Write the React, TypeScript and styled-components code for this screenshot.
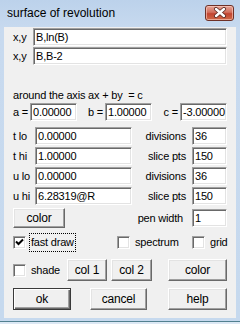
import styled, { createGlobalStyle } from "styled-components";

const GlobalStyle = createGlobalStyle`
  html, body {
    margin: 0;
    padding: 0;
    background: #dce8f4;
  }
  * {
    box-sizing: border-box;
  }
`;

const font = `"Liberation Sans", Arial, sans-serif`;

const Window = styled.div`
  width: 240px;
  height: 322px;
  display: flex;
  flex-direction: column;
  background: linear-gradient(#bcd2eb, #c8daef 30px, #c6d9ee);
  border-bottom: 1px solid #52808f;
  font-family: ${font};
`;

const TitleBar = styled.div`
  height: 27px;
  display: flex;
  align-items: center;
  padding: 0 6px 1px 7px;
`;

const Title = styled.div`
  font-size: 12px;
  color: #000;
`;

const CloseBtn = styled.div`
  margin-left: auto;
  margin-top: -1px;
  width: 29px;
  height: 16px;
  border-radius: 3px;
  border: 1px solid #6e3127;
  background: linear-gradient(#e6a597, #d26f5d 45%, #c24430 55%, #cf6a48);
  box-shadow: inset 0 0 0 1px rgba(255, 210, 200, 0.6);
  display: flex;
  align-items: center;
  justify-content: center;
`;

const Client = styled.div`
  flex: 1;
  margin: 0 4px 3px 4px;
  background: #f0f0f0;
  padding: 1px 9px 0 9px;
  display: flex;
  flex-direction: column;
  font-size: 11px;
  letter-spacing: -0.2px;
  color: #000;
`;

const Row = styled.div<{ $top: number; $h?: number }>`
  display: flex;
  align-items: center;
  margin-top: ${(p) => p.$top}px;
  height: ${(p) => p.$h ?? 18}px;
`;

const Grid = styled.div<{ $top: number; $cols: string; $h?: number }>`
  display: grid;
  grid-template-columns: ${(p) => p.$cols};
  align-items: center;
  margin-top: ${(p) => p.$top}px;
  height: ${(p) => p.$h ?? 18}px;
`;

const Label = styled.span<{ $w?: number }>`
  width: ${(p) => (p.$w ? `${p.$w}px` : "auto")};
  flex-shrink: 0;
  white-space: nowrap;
`;

const RLabel = styled.span<{ $pr?: number }>`
  justify-self: end;
  padding-right: ${(p) => p.$pr ?? 2}px;
  white-space: nowrap;
`;

const Field = styled.div<{ $w?: number }>`
  width: ${(p) => (p.$w ? `${p.$w}px` : "100%")};
  flex: ${(p) => (p.$w ? "none" : "1")};
  height: 18px;
  background: #fff;
  border-top: 1px solid #a0a0a0;
  border-left: 1px solid #a0a0a0;
  border-right: 1px solid #fff;
  border-bottom: 1px solid #fff;
  box-shadow: inset 1px 1px 0 #696969, inset -1px -1px 0 #e3e3e3;
  padding: 2px 0 0 2px;
  font-size: 11px;
  line-height: 13px;
  white-space: nowrap;
  overflow: hidden;
`;

const Button = styled.div<{ $w: number; $h?: number; $def?: boolean; $ml?: number }>`
  width: ${(p) => p.$w}px;
  height: ${(p) => p.$h ?? 22}px;
  margin-left: ${(p) => (p.$ml === undefined ? 0 : `${p.$ml}px`)};
  flex: none;
  display: flex;
  align-items: center;
  justify-content: center;
  background: #f0f0f0;
  border: 1px solid ${(p) => (p.$def ? "#3a3a3a" : "#fff")};
  border-right-color: ${(p) => (p.$def ? "#3a3a3a" : "#696969")};
  border-bottom-color: ${(p) => (p.$def ? "#3a3a3a" : "#696969")};
  box-shadow: ${(p) =>
    p.$def
      ? "inset 1px 1px 0 #fff, inset -1px -1px 0 #696969, inset -2px -2px 0 #a0a0a0"
      : "inset -1px -1px 0 #a0a0a0, inset 1px 1px 0 #e3e3e3"};
  padding-bottom: 1px;
  font-size: 12px;
  letter-spacing: -0.2px;
`;

const Check = styled.div<{ $w?: number }>`
  width: ${(p) => (p.$w ? `${p.$w}px` : "auto")};
  flex: none;
  display: flex;
  align-items: center;
  gap: 5px;
`;

const Box = styled.div`
  width: 13px;
  height: 13px;
  flex: none;
  background: #fff;
  border-top: 1px solid #a0a0a0;
  border-left: 1px solid #a0a0a0;
  border-right: 1px solid #fff;
  border-bottom: 1px solid #fff;
  box-shadow: inset 1px 1px 0 #696969, inset -1px -1px 0 #e3e3e3;
  display: flex;
  align-items: center;
  justify-content: center;
`;

const Focus = styled.span`
  outline: 1px dotted #000;
  outline-offset: 0;
  padding: 2px 1px 3px 1px;
  margin-left: -1px;
`;

const Tick = () => (
  <svg width="9" height="9" viewBox="0 0 9 9">
    <path d="M1 3.5 L3.5 6 L8 1.5" fill="none" stroke="#000" strokeWidth="2" />
  </svg>
);

const XIcon = () => (
  <svg width="14" height="11" viewBox="0 0 14 11">
    <path d="M3 2 L11 9 M11 2 L3 9" stroke="#5a2a22" strokeWidth="4" strokeLinecap="round" />
    <path d="M3 2 L11 9 M11 2 L3 9" stroke="#fff" strokeWidth="2.4" strokeLinecap="round" />
  </svg>
);

const rangeCols = "22px 97px 60px 35px";

const App = () => {
  return (
    <>
      <GlobalStyle />
      <Window>
        <TitleBar>
          <Title>surface of revolution</Title>
          <CloseBtn>
            <XIcon />
          </CloseBtn>
        </TitleBar>
        <Client>
          <Row $top={0}>
            <Label $w={20}>x,y</Label>
            <Field>B,ln(B)</Field>
          </Row>
          <Row $top={1}>
            <Label $w={20}>x,y</Label>
            <Field>B,B-2</Field>
          </Row>
          <Row $top={23} $h={14}>
            <Label>around the axis ax + by&nbsp; = c</Label>
          </Row>
          <Grid $top={1} $cols="17px 47px 28px 47px 28px 47px">
            <RLabel>a =</RLabel>
            <Field>0.00000</Field>
            <RLabel>b =</RLabel>
            <Field>1.00000</Field>
            <RLabel>c =</RLabel>
            <Field>-3.00000</Field>
          </Grid>
          <Grid $top={6} $cols={rangeCols}>
            <Label>t lo</Label>
            <Field>0.00000</Field>
            <RLabel $pr={6}>divisions</RLabel>
            <Field>36</Field>
          </Grid>
          <Grid $top={2} $cols={rangeCols}>
            <Label>t hi</Label>
            <Field>1.00000</Field>
            <RLabel $pr={6}>slice pts</RLabel>
            <Field>150</Field>
          </Grid>
          <Grid $top={2} $cols={rangeCols}>
            <Label>u lo</Label>
            <Field>0.00000</Field>
            <RLabel $pr={6}>divisions</RLabel>
            <Field>36</Field>
          </Grid>
          <Grid $top={2} $cols={rangeCols}>
            <Label>u hi</Label>
            <Field>6.28319@R</Field>
            <RLabel $pr={6}>slice pts</RLabel>
            <Field>150</Field>
          </Grid>
          <Grid $top={3} $cols="52px 127px 35px" $h={20}>
            <Button $w={52} $h={20}>color</Button>
            <RLabel $pr={9}>pen width</RLabel>
            <Field>1</Field>
          </Grid>
          <Grid $top={5} $cols="104px 75px 35px">
            <Check>
              <Box>
                <Tick />
              </Box>
              <Focus>fast draw</Focus>
            </Check>
            <Check>
              <Box />
              <span>spectrum</span>
            </Check>
            <Check>
              <Box />
              <span>grid</span>
            </Check>
          </Grid>
          <Row $top={8} $h={22}>
            <Check $w={54}>
              <Box />
              <span>shade</span>
            </Check>
            <Button $w={40}>col 1</Button>
            <Button $w={41} $ml={4}>col 2</Button>
            <Button $w={59} $ml={16}>color</Button>
          </Row>
          <Row $top={7} $h={22}>
            <Button $w={58} $def>ok</Button>
            <Button $w={57} $ml={19}>cancel</Button>
            <Button $w={59} $ml={21}>help</Button>
          </Row>
        </Client>
      </Window>
    </>
  );
};

export default App;
